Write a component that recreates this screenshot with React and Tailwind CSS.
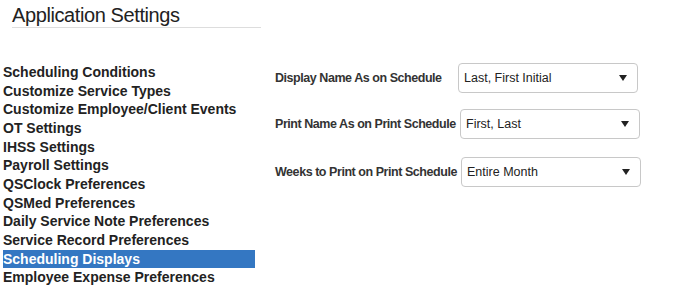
const MENU = [
  'Scheduling Conditions',
  'Customize Service Types',
  'Customize Employee/Client Events',
  'OT Settings',
  'IHSS Settings',
  'Payroll Settings',
  'QSClock Preferences',
  'QSMed Preferences',
  'Daily Service Note Preferences',
  'Service Record Preferences',
  'Scheduling Displays',
  'Employee Expense Preferences'
];

const ACTIVE = 'Scheduling Displays';

const FIELDS = [
  { label: 'Display Name As on Schedule', value: 'Last, First Initial', labelW: 'w-[183px]', mt: 'mt-0' },
  { label: 'Print Name As on Print Schedule', value: 'First, Last', labelW: 'w-[185px]', mt: 'mt-[16px]' },
  { label: 'Weeks to Print on Print Schedule', value: 'Entire Month', labelW: 'w-[186px]', mt: 'mt-[18px]' }
];

function FakeSelect({ value }) {
  return (
    <div className="flex items-center justify-between w-[180px] h-[30px] pl-[5px] pr-[10px] border border-[#c8c8c8] rounded-[4px] bg-white text-[12.5px] text-[#222]">
      <span>{value}</span>
      <svg width="8" height="6" viewBox="0 0 8 6">
        <path d="M0 0 L8 0 L4 6 Z" fill="#222" />
      </svg>
    </div>
  );
}

export default function App() {
  return (
    <div className="w-[674px] h-[290px] overflow-hidden bg-white font-['Liberation_Sans',Arial,sans-serif]">
      <div className="ml-3 w-[249px] pt-[3px] border-b border-[#dddddd] text-[20px] tracking-[-0.4px] leading-[24px] text-[#222]">
        Application Settings
      </div>

      <div className="flex mt-[35px]">
        <ul className="ml-[3px] w-[252px] shrink-0">
          {MENU.map(item => (
            <li
              key={item}
              className={`text-[14px] font-bold leading-[18.67px] whitespace-nowrap ${
                item === ACTIVE ? 'bg-[#3477c2] text-white' : 'text-[#222]'
              }`}
            >
              {item}
            </li>
          ))}
        </ul>

        <div className="ml-5 flex flex-col">
          {FIELDS.map(f => (
            <div key={f.label} className={`flex items-center ${f.mt}`}>
              <span className={`${f.labelW} shrink-0 whitespace-nowrap text-[12.5px] tracking-[-0.45px] font-bold text-[#333]`}>
                {f.label}
              </span>
              <FakeSelect value={f.value} />
            </div>
          ))}
        </div>
      </div>
    </div>
  );
}
